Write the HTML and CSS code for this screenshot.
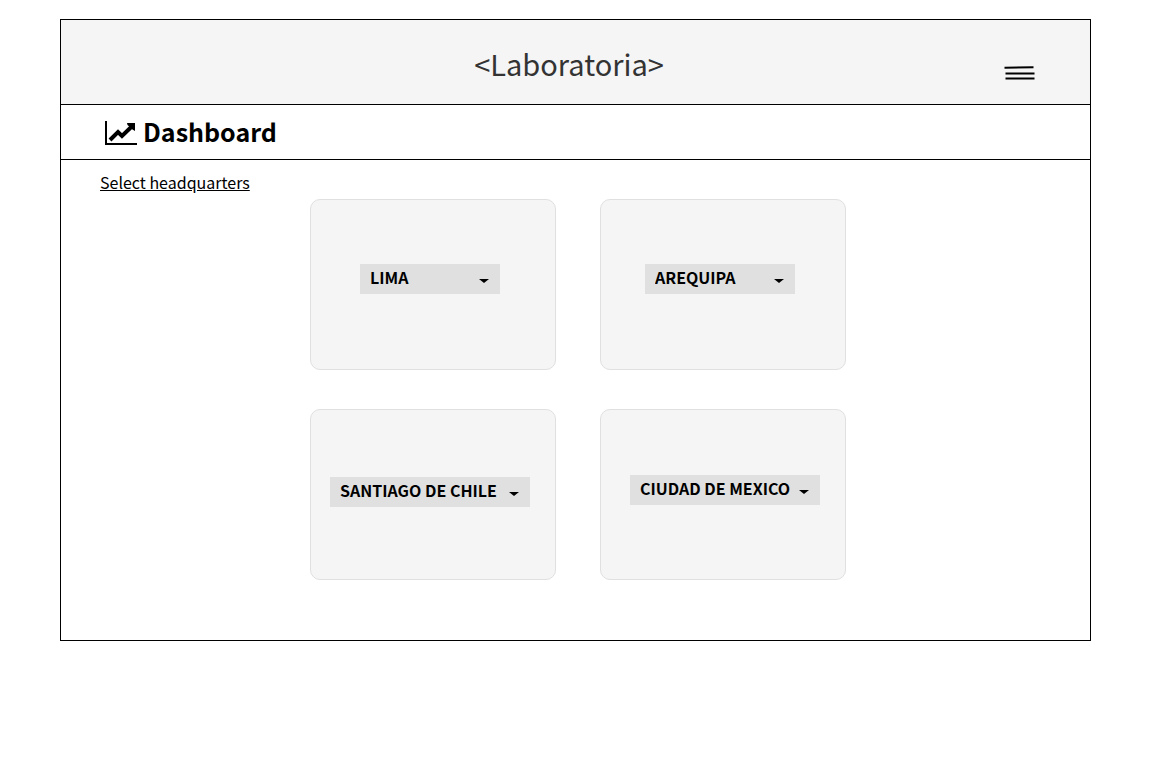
FILE: index.html
```html
<!DOCTYPE html>
<html lang="en">
<head>
<meta charset="utf-8">
<meta name="viewport" content="width=device-width, initial-scale=1">
<title>Laboratoria Dashboard</title>
<link rel="stylesheet" href="styles.css">
</head>
<body>
<div class="frame">
  <header class="topbar">
    <div class="brand">&lt;Laboratoria&gt;</div>
    <button class="menu" type="button" aria-label="Menu">
      <svg width="32" height="16" viewBox="0 0 32 16" fill="none" stroke="#000" stroke-width="2" aria-hidden="true">
        <path d="M.5 2.700 29.500 2.200M1.500 8.500H30.500M1.500 13.500H30.500"/>
      </svg>
    </button>
  </header>
  <div class="titlebar">
    <svg class="chart" width="32" height="24" viewBox="0 0 32 24" aria-hidden="true">
      <path d="M0 0h2v22h30v2H0z"/>
      <path d="M5 19 13 11 17 15 26 6.300" fill="none" stroke="#000" stroke-width="4"/>
      <path d="M22 2h8v8l-2.500-1.500-5-4.500z"/>
    </svg>
    <h1 class="title">Dashboard</h1>
  </div>
  <main class="content">
    <h2 class="subtitle">Select headquarters</h2>
    <div class="grid">
      <div class="card">
        <div class="picker picker-lima">
          <select class="select" aria-label="Lima"><option>LIMA</option></select>
          <svg class="caret" width="10" height="4" viewBox="0 0 10 4" aria-hidden="true"><path d="M0 0h10L5 4z"/></svg>
        </div>
      </div>
      <div class="card">
        <div class="picker picker-arequipa">
          <select class="select" aria-label="Arequipa"><option>AREQUIPA</option></select>
          <svg class="caret" width="10" height="4" viewBox="0 0 10 4" aria-hidden="true"><path d="M0 0h10L5 4z"/></svg>
        </div>
      </div>
      <div class="card card-santiago">
        <div class="picker picker-santiago">
          <select class="select" aria-label="Santiago de Chile"><option>SANTIAGO DE CHILE</option></select>
          <svg class="caret" width="10" height="4" viewBox="0 0 10 4" aria-hidden="true"><path d="M0 0h10L5 4z"/></svg>
        </div>
      </div>
      <div class="card card-mexico">
        <div class="picker picker-mexico">
          <select class="select" aria-label="Ciudad de Mexico"><option>CIUDAD DE MEXICO</option></select>
          <svg class="caret" width="10" height="4" viewBox="0 0 10 4" aria-hidden="true"><path d="M0 0h10L5 4z"/></svg>
        </div>
      </div>
    </div>
  </main>
</div>
</body>
</html>
```

FILE: styles.css
```css
* {
  box-sizing: border-box;
}

body {
  margin: 0;
  padding: 19px 59px 19px 60px;
  background: #fff;
  color: #000;
  font-family: "Noto Sans CJK SC", "Noto Sans", sans-serif;
  font-size: 16px;
}

.frame {
  border: 1px solid #000;
}

.topbar {
  display: grid;
  grid-template-columns: 1fr auto 1fr;
  align-items: center;
  padding: 21px 54px 19px 41px;
  background: #f5f5f5;
  border-bottom: 1px solid #000;
}

.brand {
  grid-column: 2;
  color: #333;
  font-size: 29px;
  line-height: 44px;
}

.menu {
  justify-self: end;
  margin-top: 20px;
  padding: 0;
  border: 0;
  background: none;
}

.menu svg,
.chart {
  display: block;
}

.titlebar {
  display: flex;
  align-items: center;
  gap: 6px;
  padding: 6px 44px 8px;
  border-bottom: 1px solid #000;
}

.chart {
  margin-top: 4px;
}

.title {
  margin: 0;
  font-size: 25px;
  font-weight: 700;
  line-height: 40px;
}

.content {
  padding: 10px 39px 60px;
}

.subtitle {
  margin: 0 0 5px;
  font-size: 16px;
  font-weight: 400;
  line-height: 24px;
  text-decoration: underline;
}

.grid {
  display: grid;
  grid-template-columns: repeat(2, minmax(0, 246px));
  justify-content: center;
  gap: 39px 44px;
  padding-left: 5px;
}

.card {
  display: flex;
  align-items: center;
  justify-content: center;
  min-height: 171px;
  padding: 0 6px 12px 0;
  background: #f5f5f5;
  border: 1px solid #e0e0e0;
  border-radius: 10px;
}

.card-santiago {
  padding-bottom: 6px;
}

.card-mexico {
  padding: 0 0 10px 4px;
}

.picker {
  position: relative;
}

.picker-lima {
  width: 140px;
}

.picker-arequipa {
  width: 150px;
}

.picker-santiago {
  width: 200px;
}

.picker-mexico {
  width: 190px;
}

.select {
  display: block;
  appearance: none;
  width: 100%;
  height: 30px;
  margin: 0;
  padding: 0 10px 4px;
  border: 0;
  border-radius: 0;
  background: #e0e0e0;
  color: #000;
  font: inherit;
  font-weight: 700;
}

.caret {
  position: absolute;
  top: 15px;
  right: 11px;
  pointer-events: none;
}
```
